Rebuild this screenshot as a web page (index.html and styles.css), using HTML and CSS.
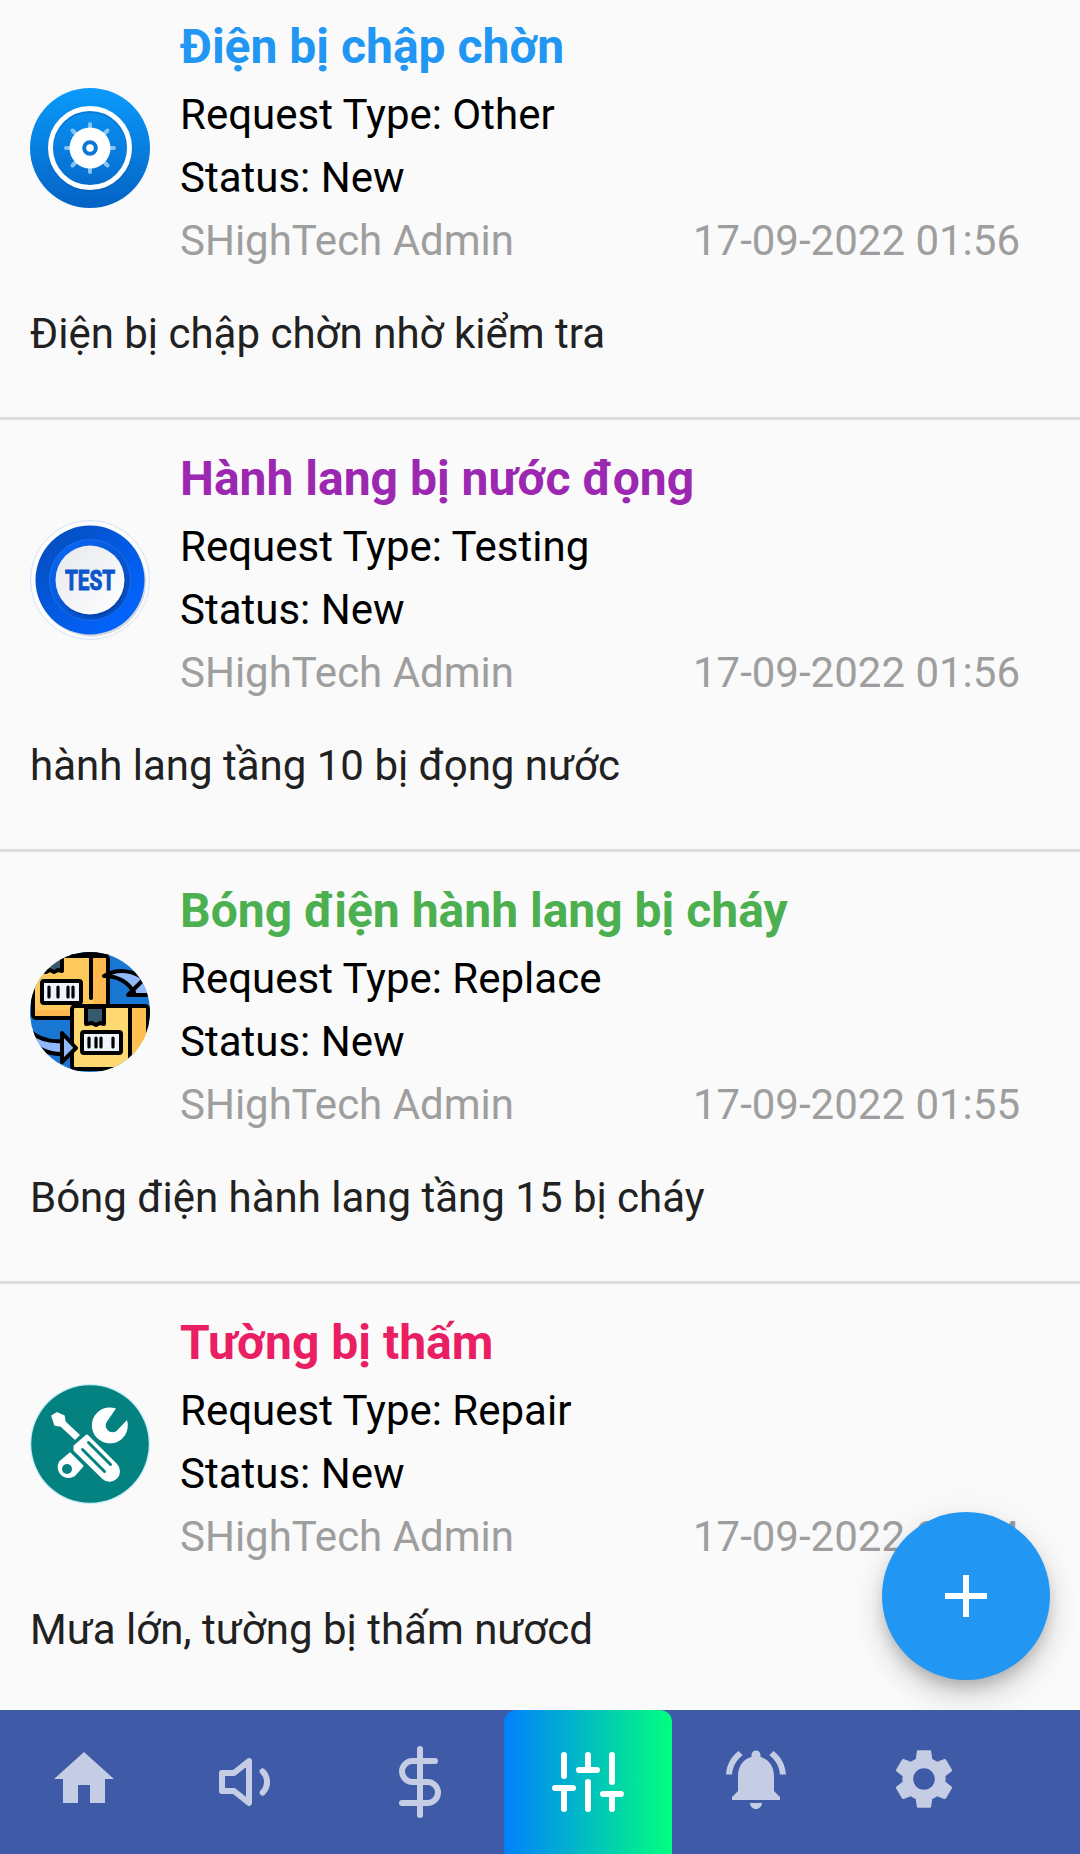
FILE: index.html
```html
<!DOCTYPE html>
<html lang="vi">
    <head>
        <meta charset="utf-8">
        <title>Requests</title>
        <link rel="stylesheet" href="styles.css">
    </head>
    <body>

        <main id="requests">
            <article class="request">
                <div class="head">
                    <svg class="avatar" viewBox="0 0 120 120">
                        <defs>
                            <linearGradient id="otherBg" x1="0" y1="0" x2="0" y2="1">
                                <stop offset="0" stop-color="#0a9bfb"/>
                                <stop offset="1" stop-color="#0462c4"/>
                            </linearGradient>
                        </defs>
                        <circle cx="60" cy="60" r="60" fill="url(#otherBg)"/>
                        <circle cx="60" cy="61.500" r="39.500" fill="none" stroke="#0459ae" stroke-opacity=".35" stroke-width="6"/>
                        <circle cx="60" cy="60" r="39.500" fill="none" stroke="#fff" stroke-width="5"/>
                        <g stroke="#84c4f6" stroke-width="4" stroke-linecap="round">
                            <path d="M60 36v48M36 60h48M42.500 42.500l35 35M77.500 42.500l-35 35"/>
                        </g>
                        <circle cx="60" cy="60" r="20.500" fill="#fff"/>
                        <circle cx="60" cy="60" r="5.800" fill="#fff" stroke="#0a78d2" stroke-width="4"/>
                    </svg>
                    <div class="info">
                        <h2 class="blue">Điện bị chập chờn</h2>
                        <p>Request Type: Other</p>
                        <p>Status: New</p>
                        <p class="meta"><span>SHighTech Admin</span><time>17-09-2022 01:56</time></p>
                    </div>
                </div>
                <p class="message">Điện bị chập chờn nhờ kiểm tra</p>
            </article>

            <article class="request">
                <div class="head">
                    <svg class="avatar" viewBox="0 0 120 120">
                        <defs>
                            <linearGradient id="testRing" x1="0" y1="0" x2="1" y2="1">
                                <stop offset="0.150" stop-color="#0450c4"/>
                                <stop offset="0.800" stop-color="#0262fa"/>
                            </linearGradient>
                            <linearGradient id="testInner" x1="0" y1="0" x2="1" y2="1">
                                <stop offset="0" stop-color="#0a68fa"/>
                                <stop offset="1" stop-color="#0448b4"/>
                            </linearGradient>
                            <linearGradient id="testFace" x1="0" y1="0" x2="1" y2="1">
                                <stop offset="0" stop-color="#e6e8ec"/>
                                <stop offset="1" stop-color="#ffffff"/>
                            </linearGradient>
                        </defs>
                        <circle cx="60" cy="60" r="59.500" fill="#fdfdfe" stroke="#c9dcf6" stroke-width=".8"/>
                        <circle cx="61.500" cy="62" r="54.500" fill="#d5d8de"/>
                        <circle cx="60" cy="60" r="54.500" fill="url(#testRing)"/>
                        <circle cx="60" cy="60" r="40.500" fill="url(#testInner)" stroke="#1a70f0" stroke-width="1"/>
                        <circle cx="61" cy="62.500" r="34.500" fill="#023c98" opacity=".5"/>
                        <circle cx="60" cy="60" r="34.500" fill="url(#testFace)"/>
                        <text x="60" y="70" class="avatar-text" textLength="50" lengthAdjust="spacingAndGlyphs">TEST</text>
                    </svg>
                    <div class="info">
                        <h2 class="purple">Hành lang bị nước đọng</h2>
                        <p>Request Type: Testing</p>
                        <p>Status: New</p>
                        <p class="meta"><span>SHighTech Admin</span><time>17-09-2022 01:56</time></p>
                    </div>
                </div>
                <p class="message">hành lang tầng 10 bị đọng nước</p>
            </article>

            <article class="request">
                <div class="head">
                    <svg class="avatar" viewBox="0 0 120 120">
                        <defs>
                            <clipPath id="round"><circle cx="60" cy="60" r="60"/></clipPath>
                        </defs>
                        <g clip-path="url(#round)" stroke="#000" stroke-width="4" stroke-linecap="round" stroke-linejoin="round">
                            <rect width="120" height="120" fill="#1976d2" stroke="none"/>
                            <path d="M-4-4H124V3H-4z" fill="#000" stroke="none"/>
                            <!-- back box -->
                            <rect x="3" y="4" width="75" height="62" rx="3" fill="#fec95c"/>
                            <path d="M63 6h13v46H63zM5 58h35v6H5z" fill="#feb84e" stroke="none"/>
                            <path d="M12 4h20v15l-4-1-4 2-4-2-4 2-6-1z" fill="#37596e"/>
                            <path d="M61 4v42"/>
                            <rect x="12" y="29" width="39" height="22" rx="2" fill="#edf4fc"/>
                            <path d="M19 35v10M28 35v10M38 35v10M43 35v10" stroke-width="3.200"/>
                            <!-- front box -->
                            <rect x="42" y="54" width="76" height="63" rx="3" fill="#fed871"/>
                            <path d="M102 56h14v60h-14z" fill="#fec050" stroke="none"/>
                            <path d="M100 54v62"/>
                            <path d="M56 55h18v17l-4-1-4 2-4-2-6 1z" fill="#37596e"/>
                            <rect x="52" y="80" width="39" height="21" rx="2" fill="#edf4fc"/>
                            <path d="M59 86v9M66 86v9M71 86v9M83 86v9" stroke-width="3.200"/>
                            <!-- arrows -->
                            <path d="M74 24c14 0 23 5 30 16l-6 3h30V24l-12 5C105 18 88 16 74 24z" fill="#91b8fa"/>
                            <path d="M99 42l14-14"/>
                            <path d="M-2 77c9 10 20 13 34 12V81l14 15-14 14v-8C15 102 3 94-4 82z" fill="#91b8fa"/>
                            <path d="M32 90v12"/>
                        </g>
                    </svg>
                    <div class="info">
                        <h2 class="green">Bóng điện hành lang bị cháy</h2>
                        <p>Request Type: Replace</p>
                        <p>Status: New</p>
                        <p class="meta"><span>SHighTech Admin</span><time>17-09-2022 01:55</time></p>
                    </div>
                </div>
                <p class="message">Bóng điện hành lang tầng 15 bị cháy</p>
            </article>

            <article class="request">
                <div class="head">
                    <svg class="avatar" viewBox="0 0 120 120">
                        <circle cx="60" cy="60" r="60" fill="#c5eaf5"/>
                        <circle cx="60" cy="60" r="58.700" fill="#048181"/>
                        <!-- wrench -->
                        <path d="M86 24.500A18 18 0 1 0 97 36L86.500 47A6.800 6.800 0 0 1 77 37.500z" fill="#fff"/>
                        <path d="M40 69.500L52.500 82 44 91.500A10 10 0 0 1 30 78z" fill="#fff" stroke="#fff" stroke-width="2" stroke-linejoin="round"/>
                        <circle cx="37" cy="85" r="5" fill="#048181"/>
                        <!-- screwdriver -->
                        <path d="M22 32l5-3 7 3 1 6 14 13-4 4-14-13-6-1z" fill="#fff" stroke="#fff" stroke-width="1.500" stroke-linejoin="round"/>
                        <path d="M45 62.500l12-10.500 29 29a9 9 0 0 1-13 12.500L45 66z" fill="#fff" stroke="#fff" stroke-width="3" stroke-linejoin="round"/>
                        <path d="M52.500 65.500l22 22M58.500 58.500l22 22" stroke="#048181" stroke-width="3" stroke-linecap="round"/>
                    </svg>
                    <div class="info">
                        <h2 class="pink">Tường bị thấm</h2>
                        <p>Request Type: Repair</p>
                        <p>Status: New</p>
                        <p class="meta"><span>SHighTech Admin</span><time>17-09-2022 01:54</time></p>
                    </div>
                </div>
                <p class="message">Mưa lớn, tường bị thấm nươcd</p>
            </article>
        </main>

        <button id="add" type="button" aria-label="Add">
            <svg class="icon" viewBox="0 0 24 24"><path d="M19 13h-6v6h-2v-6H5v-2h6V5h2v6h6v2z"/></svg>
        </button>

        <nav id="tabs">
            <a class="tab">
                <svg class="icon" viewBox="0 0 24 24"><path d="M10 20v-6h4v6h5v-8h3L12 3 2 12h3v8z"/></svg>
            </a>
            <a class="tab">
                <svg class="icon line" viewBox="0 0 24 24"><path d="M11 5L6 9H2v6h4l5 4V5zM15.540 8.460a5 5 0 0 1 0 7.070"/></svg>
            </a>
            <a class="tab">
                <svg class="icon line" viewBox="0 0 24 24"><path d="M12 1v22M17 5H9.500a3.500 3.500 0 0 0 0 7h5a3.500 3.500 0 0 1 0 7H6"/></svg>
            </a>
            <a class="tab active">
                <svg class="icon line" viewBox="0 0 24 24"><path d="M4 21v-7M4 10V3M12 21v-9M12 8V3M20 21v-5M20 12V3M1 14h6M9 8h6M17 16h6"/></svg>
            </a>
            <a class="tab">
                <svg class="icon" viewBox="0 0 24 24"><path d="M7.580 4.080L6.150 2.650C3.750 4.480 2.170 7.300 2.030 10.500h2c.15-2.650 1.510-4.970 3.550-6.420zm12.390 6.420h2c-.15-3.200-1.730-6.020-4.120-7.850l-1.420 1.430c2.020 1.450 3.390 3.770 3.540 6.420zM18 11c0-3.070-1.640-5.640-4.500-6.320V4c0-.83-.67-1.500-1.500-1.500s-1.500.67-1.500 1.500v.68C7.630 5.360 6 7.920 6 11v5l-2 2v1h16v-1l-2-2v-5zm-6 11c.14 0 .27-.01.4-.04.65-.14 1.180-.58 1.440-1.180.1-.24.15-.5.15-.78h-4c.01 1.100.9 2 2.010 2z"/></svg>
            </a>
            <a class="tab">
                <svg class="icon" viewBox="0 0 24 24"><path d="M19.140 12.940c.04-.3.060-.61.060-.94 0-.32-.02-.64-.07-.94l2.030-1.580c.18-.14.23-.41.120-.61l-1.920-3.320c-.12-.22-.37-.29-.59-.22l-2.390.96c-.5-.38-1.030-.7-1.620-.94l-.36-2.540c-.04-.24-.24-.41-.48-.41h-3.840c-.24 0-.43.17-.47.41l-.36 2.540c-.59.24-1.130.57-1.620.94l-2.390-.96c-.22-.08-.47 0-.59.22L2.740 8.870c-.12.21-.08.47.12.61l2.030 1.580c-.05.3-.09.63-.09.94s.02.64.07.94l-2.030 1.580c-.18.14-.23.41-.12.61l1.920 3.320c.12.22.37.29.59.22l2.390-.96c.5.38 1.030.7 1.620.94l.36 2.540c.05.24.24.41.48.41h3.840c.24 0 .44-.17.47-.41l.36-2.540c.59-.24 1.130-.56 1.620-.94l2.390.96c.22.08.47 0 .59-.22l1.920-3.320c.12-.22.07-.47-.12-.61l-2.010-1.580zM12 15.600c-1.980 0-3.600-1.620-3.600-3.600s1.620-3.600 3.600-3.600 3.600 1.620 3.600 3.600-1.620 3.600-3.600 3.600z"/></svg>
            </a>
        </nav>

    </body>
</html>
```

FILE: styles.css
```css
body {
    margin: 0;
    height: 1854px;
    display: flex;
    flex-direction: column;
    overflow: hidden;
    background: #FAFAFA;
    color: #000;
    font-family: Roboto, sans-serif;
    font-size: 42px;
    line-height: 63px;
}

h2, p {
    margin: 0;
}

#requests {
    flex: 1;
    min-height: 0;
    overflow: hidden;
}

.request {
    box-sizing: border-box;
    height: 432px;
    padding: 23px 60px 0 30px;
    border-bottom: 3px solid #DEDEDE;
}

/* the list is scrolled a bit */
.request:first-child {
    height: 420px;
    padding-top: 11px;
}

.head {
    display: flex;
    align-items: center;
    gap: 30px;
}

.avatar {
    width: 120px;
    height: 120px;
    margin-top: 13px;
    flex: none;
}

.avatar-text {
    font: bold 27px Roboto, sans-serif;
    text-anchor: middle;
    fill: #0C56CC;
    stroke: #0C56CC;
    stroke-width: 1px;
}

.info {
    flex: 1;
}

.info h2 {
    font-size: 48px;
    line-height: 72px;
    font-weight: bold;
}

.meta {
    display: flex;
    justify-content: space-between;
    color: #9E9E9E;
}

.message {
    margin-top: 30px;
    color: #212121;
}

.blue { color: #2196F3; }
.purple { color: #9C27B0; }
.green { color: #4CAF50; }
.pink { color: #E91E63; }

.icon {
    display: block;
    width: 72px;
    height: 72px;
    fill: currentColor;
}

.icon.line {
    margin-top: 6px;
    fill: none;
    stroke: currentColor;
    stroke-width: 2;
    stroke-linecap: round;
    stroke-linejoin: round;
}

#add {
    position: absolute;
    right: 30px;
    top: 1512px;
    width: 168px;
    height: 168px;
    padding: 48px;
    border: 0;
    border-radius: 50%;
    background: #2196F3;
    color: #fff;
    box-shadow: 0 9px 15px -3px rgba(0,0,0,.2), 0 18px 30px rgba(0,0,0,.12), 0 3px 40px rgba(0,0,0,.06);
}

#tabs {
    flex: none;
    display: flex;
    height: 144px;
    background: #3F5AA6;
    position: relative;
}

.tab {
    display: flex;
    align-items: center;
    justify-content: center;
    box-sizing: border-box;
    width: 168px;
    padding-bottom: 6px;
    color: #C5CDE4;
}

.tab.active {
    border-radius: 12px 12px 0 0;
    background: linear-gradient(to right, #0080FF, #00FF80);
    color: #fff;
}
```
